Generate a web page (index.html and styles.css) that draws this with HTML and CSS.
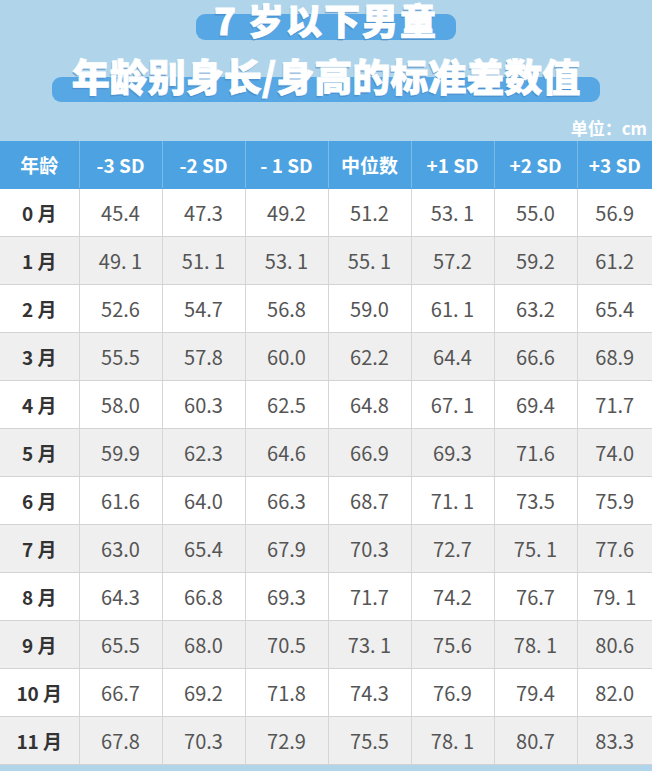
FILE: index.html
```html
<!DOCTYPE html>
<html lang="zh-CN">
<head>
<meta charset="utf-8">
<title>7岁以下男童年龄别身长/身高的标准差数值</title>
<link rel="stylesheet" href="styles.css">
</head>
<body>
<div class="page">
  <header class="head">
    <div class="t1"><span class="pill pill1">7 岁以下男童</span></div>
    <div class="t2"><span class="pill pill2">年龄别身长/身高的标准差数值</span></div>
    <div class="unit">单位：cm</div>
  </header>
  <table class="grid">
    <colgroup>
      <col class="c-age"><col class="c-v"><col class="c-v"><col class="c-v"><col class="c-v"><col class="c-v"><col class="c-v"><col class="c-last">
    </colgroup>
    <thead>
      <tr><th>年龄</th><th>-3 SD</th><th>-2 SD</th><th>- 1 SD</th><th>中位数</th><th>+1 SD</th><th>+2 SD</th><th>+3 SD</th></tr>
    </thead>
    <tbody>
      <tr><td class="age">0 月</td><td>45.4</td><td>47.3</td><td>49.2</td><td>51.2</td><td>53. 1</td><td>55.0</td><td>56.9</td></tr>
      <tr><td class="age">1 月</td><td>49. 1</td><td>51. 1</td><td>53. 1</td><td>55. 1</td><td>57.2</td><td>59.2</td><td>61.2</td></tr>
      <tr><td class="age">2 月</td><td>52.6</td><td>54.7</td><td>56.8</td><td>59.0</td><td>61. 1</td><td>63.2</td><td>65.4</td></tr>
      <tr><td class="age">3 月</td><td>55.5</td><td>57.8</td><td>60.0</td><td>62.2</td><td>64.4</td><td>66.6</td><td>68.9</td></tr>
      <tr><td class="age">4 月</td><td>58.0</td><td>60.3</td><td>62.5</td><td>64.8</td><td>67. 1</td><td>69.4</td><td>71.7</td></tr>
      <tr><td class="age">5 月</td><td>59.9</td><td>62.3</td><td>64.6</td><td>66.9</td><td>69.3</td><td>71.6</td><td>74.0</td></tr>
      <tr><td class="age">6 月</td><td>61.6</td><td>64.0</td><td>66.3</td><td>68.7</td><td>71. 1</td><td>73.5</td><td>75.9</td></tr>
      <tr><td class="age">7 月</td><td>63.0</td><td>65.4</td><td>67.9</td><td>70.3</td><td>72.7</td><td>75. 1</td><td>77.6</td></tr>
      <tr><td class="age">8 月</td><td>64.3</td><td>66.8</td><td>69.3</td><td>71.7</td><td>74.2</td><td>76.7</td><td>79. 1</td></tr>
      <tr><td class="age">9 月</td><td>65.5</td><td>68.0</td><td>70.5</td><td>73. 1</td><td>75.6</td><td>78. 1</td><td>80.6</td></tr>
      <tr><td class="age">10 月</td><td>66.7</td><td>69.2</td><td>71.8</td><td>74.3</td><td>76.9</td><td>79.4</td><td>82.0</td></tr>
      <tr><td class="age">11 月</td><td>67.8</td><td>70.3</td><td>72.9</td><td>75.5</td><td>78. 1</td><td>80.7</td><td>83.3</td></tr>
    </tbody>
  </table>
</div>
</body>
</html>
```

FILE: styles.css
```css
html, body {
  margin: 0;
  padding: 0;
  background: #b0d5ea;
}
body {
  font-family: "Noto Sans CJK SC", "Noto Sans", sans-serif;
  width: 652px;
  height: 771px;
  overflow: hidden;
}
.page {
  width: 652px;
}
.head {
  height: 141px;
  display: flex;
  flex-direction: column;
  align-items: center;
}
.t1, .t2 {
  display: flex;
  justify-content: center;
  width: 100%;
}
.pill {
  position: relative;
  display: inline-block;
  color: #ffffff;
  font-weight: 900;
  white-space: nowrap;
  z-index: 0;
  -webkit-text-stroke: 0.8px #ffffff;
  text-shadow: -1px 2px 0 rgba(70, 130, 190, 0.55);
}
.pill::before {
  content: "";
  position: absolute;
  left: 0;
  right: 0;
  z-index: -1;
  background: #56a7e4;
  border-radius: 9px;
}
.pill1 {
  margin-top: 0;
  font-size: 36px;
  line-height: 39px;
  height: 39px;
  padding: 0 18px;
  letter-spacing: 2px;
}
.pill1::before {
  top: 14px;
  height: 26px;
}
.pill2 {
  margin-top: 14px;
  font-size: 38px;
  line-height: 44px;
  height: 44px;
  padding: 0 20px 0 20px;
  letter-spacing: 0;
}
.pill2::before {
  top: 24px;
  height: 25px;
}
.unit {
  align-self: flex-end;
  margin-top: 20px;
  margin-right: 5px;
  color: #ffffff;
  font-weight: 700;
  font-size: 17px;
  line-height: 22px;
}
.grid {
  width: 652px;
  table-layout: fixed;
  border-collapse: collapse;
}
.c-age { width: 79px; }
.c-v { width: 83px; }
.c-last { width: 75px; }
.grid th {
  background: #4da3e1;
  color: #ffffff;
  font-weight: 700;
  font-size: 19px;
  height: 47px;
  padding: 0;
  border-left: 1px solid #7bbbe9;
  border-bottom: 1px solid #4da3e1;
}
.grid th:first-child { border-left: 0; }
.grid td {
  height: 47px;
  padding: 0;
  text-align: center;
  font-size: 20px;
  color: #555555;
  border-left: 1px solid #d6d6d6;
  border-bottom: 1px solid #d3d3d3;
}
.grid td:first-child { border-left: 0; }
.grid tbody tr:nth-child(odd) td { background: #ffffff; }
.grid tbody tr:nth-child(even) td { background: #efefef; }
.grid td.age {
  font-weight: 700;
  color: #333333;
  font-size: 19px;
}
```
